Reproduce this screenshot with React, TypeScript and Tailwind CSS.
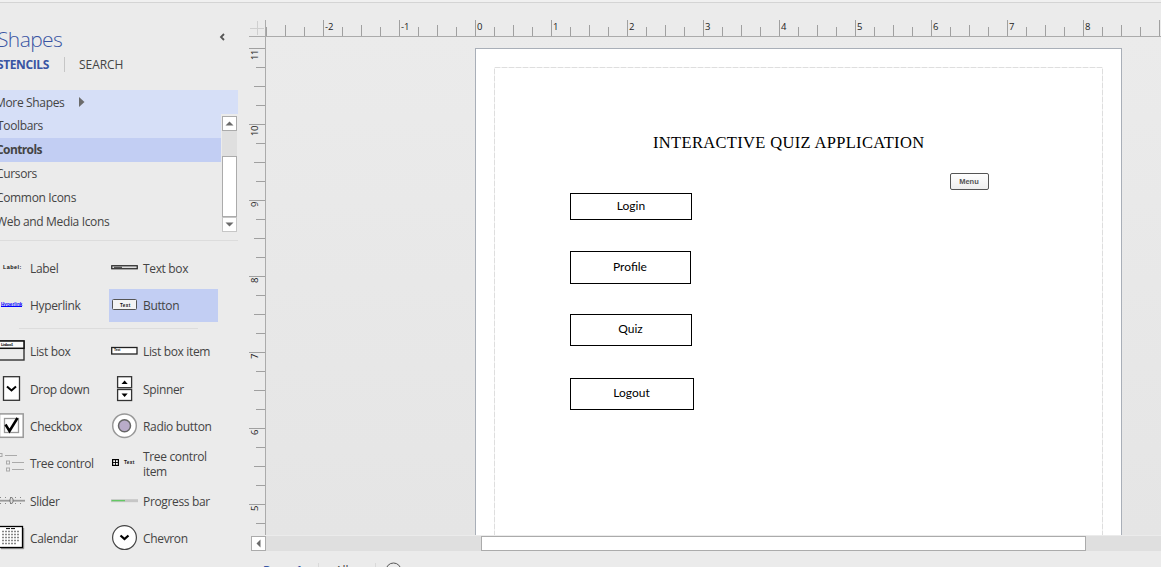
import React from "react";

const STENCILS = [
  { name: "Toolbars", row: "bg-[#d6dff7]", text: "-ml-[3px]" },
  { name: "Controls", row: "bg-[#c2cef3]", text: "-ml-[4px] font-bold tracking-[-0.6px]" },
  { name: "Cursors", row: "", text: "-ml-[4px]" },
  { name: "Common Icons", row: "", text: "-ml-[4px]" },
  { name: "Web and Media Icons", row: "", text: "-ml-[4px]" },
];

type IconProps = { h: number; children: React.ReactNode };

function LeftIcon({ h, children }: IconProps) {
  return (
    <svg className="block w-[30px] shrink-0" style={{ height: h }} viewBox={`0 0 30 ${h}`} fill="none">
      {children}
    </svg>
  );
}

function RightIcon({ h, children }: IconProps) {
  return (
    <svg className="block w-[34px] shrink-0" style={{ height: h }} viewBox={`0 0 34 ${h}`} fill="none">
      {children}
    </svg>
  );
}

const tiny = { fontFamily: "Liberation Sans, sans-serif", fontWeight: 700 };

type RowProps = {
  h: number;
  left: React.ReactNode;
  leftName: string;
  right: React.ReactNode;
  rightName: string;
  selected?: boolean;
};

function ShapeRow({ h, left, leftName, right, rightName, selected }: RowProps) {
  return (
    <div className="flex w-[218px]" style={{ height: h }}>
      <div className="flex w-[109px] items-center whitespace-nowrap">
        <LeftIcon h={h}>{left}</LeftIcon>
        <span className="pt-px">{leftName}</span>
      </div>
      <div className="flex w-[109px] items-center">
        <div className={selected ? "flex h-[33px] w-full items-center bg-[#c2cef3]" : "flex w-full items-center"}>
          <RightIcon h={selected ? 33 : h}>{right}</RightIcon>
          <span className="leading-[15px]">{rightName}</span>
        </div>
      </div>
    </div>
  );
}

function ShapeList() {
  return (
    <div className="mt-[9px] flex flex-col">
      <ShapeRow
        h={37}
        leftName="Label"
        left={<text x="3" y="19" fontSize="5.5" textLength="18" fill="#111" style={tiny}>Label:</text>}
        rightName="Text box"
        right={
          <>
            <rect x="2.75" y="15.75" width="25.5" height="3" fill="#ddd" stroke="#222" strokeWidth="1.2" />
            <path d="M5 17.3h8" stroke="#333" />
          </>
        }
      />
      <ShapeRow
        h={37}
        leftName="Hyperlink"
        left={
          <>
            <text x="1" y="19" fontSize="4.6" textLength="21" fill="#00f" style={tiny}>Hyperlink</text>
            <path d="M1 19.5h21" stroke="#00f" />
          </>
        }
        rightName="Button"
        selected
        right={
          <>
            <rect x="3.5" y="10.5" width="24" height="10" rx="1" fill="#f4f4f4" stroke="#555" />
            <text x="11" y="17.5" fontSize="4.6" textLength="10" fill="#111" style={tiny}>Text</text>
          </>
        }
      />
      <div className="ml-[19px] flex h-[9px] w-[179px] items-center">
        <div className="h-px w-full bg-[#dcdcdc]" />
      </div>
      <ShapeRow
        h={37}
        leftName="List box"
        left={
          <>
            <rect x="-2" y="8" width="26" height="19" stroke="#333" strokeWidth="1.4" />
            <rect x="-2" y="8" width="26" height="7.3" fill="#fafafa" stroke="#111" strokeWidth="1.5" />
            <text x="1" y="13.3" fontSize="4" textLength="12" fill="#111" style={tiny}>Listbox1</text>
          </>
        }
        rightName="List box item"
        right={
          <>
            <rect x="2.7" y="14.5" width="25.3" height="6.5" fill="#fff" stroke="#222" strokeWidth="1.3" />
            <text x="5" y="18.4" fontSize="3.4" textLength="6" fill="#111" style={tiny}>Text</text>
          </>
        }
      />
      <ShapeRow
        h={38}
        leftName="Drop down"
        left={
          <>
            <rect x="3.5" y="6.7" width="16" height="23.6" fill="#fff" stroke="#333" strokeWidth="1.3" />
            <path d="M7 16.5l4.5 4 4.5-4" stroke="#000" strokeWidth="2" />
          </>
        }
        rightName="Spinner"
        right={
          <>
            <rect x="8.6" y="6.7" width="14" height="11" fill="#fff" stroke="#333" strokeWidth="1.3" />
            <rect x="8.6" y="19.5" width="14" height="11" fill="#fff" stroke="#333" strokeWidth="1.3" />
            <path d="M12.5 14l3.1-3.500 3.100 3.500zM12.500 23.500h6.200l-3.100 3.500z" fill="#000" />
          </>
        }
      />
      <ShapeRow
        h={37}
        leftName="Checkbox"
        left={
          <>
            <rect x="-0.5" y="5.9" width="23.7" height="23.4" fill="#fff" stroke="#999" strokeWidth="1.5" />
            <rect x="4.5" y="10.5" width="14" height="14" stroke="#999" strokeWidth="1.3" />
            <path d="M5.5 16.5l4 6.500L17.500 10" stroke="#000" strokeWidth="2.500" />
          </>
        }
        rightName="Radio button"
        right={
          <>
            <circle cx="15.5" cy="17.7" r="11.8" fill="#fff" stroke="#999" strokeWidth="1.5" />
            <circle cx="15.5" cy="17.7" r="6" fill="#b9acc9" stroke="#666" strokeWidth="1.5" />
          </>
        }
      />
      <ShapeRow
        h={37}
        leftName="Tree control"
        left={
          <g stroke="#aaa">
            <rect x="-0.5" y="8.5" width="2.5" height="3" />
            <rect x="6.5" y="16" width="3" height="3" />
            <rect x="6.5" y="23" width="3" height="3" />
            <path d="M5 10.5h12M12 17.5h12M12 24.5h12" />
          </g>
        }
        rightName="Tree control item"
        right={
          <>
            <rect x="3.6" y="14.6" width="5.8" height="5.8" fill="#fff" stroke="#000" strokeWidth="1.2" />
            <path d="M4 17.5h5M6.5 15v5" stroke="#000" strokeWidth="0.9" />
            <text x="15" y="19.3" fontSize="4.8" textLength="10" fill="#111" style={tiny}>Text</text>
          </>
        }
      />
      <ShapeRow
        h={38}
        leftName="Slider"
        left={
          <>
            <path d="M0 18.7h25" stroke="#999" strokeWidth="1.8" />
            <path d="M0 15.5h25M0 21.5h25" stroke="#888" strokeDasharray="1 4" />
            <path d="M11.5 15l1.5 2v3l-1.500 2-1.500-2v-3z" fill="#ddd" stroke="#666" strokeWidth="0.800" />
          </>
        }
        rightName="Progress bar"
        right={
          <>
            <path d="M2 18.7h27" stroke="#c6c6c6" strokeWidth="3" />
            <path d="M2.5 18.6h13.500" stroke="#63c963" strokeWidth="1.300" />
          </>
        }
      />
      <ShapeRow
        h={37}
        leftName="Calendar"
        left={
          <>
            <path d="M1 28.7h22.700V8" stroke="#888" />
            <rect x="-1" y="6.5" width="23.5" height="21" fill="#fff" stroke="#000" strokeWidth="1.3" />
            <path d="M6 8.6h10" stroke="#000" strokeDasharray="4 1" />
            <path
              d="M2.5 11.5h18M2.5 14.5h18M2.5 17.5h18M2.5 20.5h18M2.5 23.5h15"
              stroke="#111"
              strokeDasharray="1 2"
              strokeWidth="1.5"
            />
          </>
        }
        rightName="Chevron"
        right={
          <>
            <circle cx="15.5" cy="17.6" r="11.9" fill="#fff" stroke="#444" strokeWidth="1.2" />
            <path d="M11.5 15.5l4 3.500 4-3.500" stroke="#000" strokeWidth="2.300" />
          </>
        }
      />
    </div>
  );
}

function Triangle({ d }: { d: string }) {
  return (
    <svg className="size-[9px]" viewBox="0 0 9 9" fill="#6b6b6b">
      <path d={d} />
    </svg>
  );
}

function ShapesPanel() {
  return (
    <aside className="flex w-[249px] shrink-0 flex-col overflow-hidden text-[12px] tracking-[-0.34px] text-[#444]">
      <div className="flex h-[51px] items-end justify-between pr-[23px]">
        <h1 className="mb-px -ml-[3px] text-[21px] leading-[28px] font-light tracking-[-0.6px] text-[#3955a3]">Shapes</h1>
        <svg className="mb-[13px] size-[8px]" viewBox="0 0 8 8" fill="none" stroke="#555" strokeWidth="1.8">
          <path d="M6 1L3 4l3 3" />
        </svg>
      </div>
      <div className="flex h-[36px] items-start pt-[3px] leading-[16px]">
        <span className="-ml-[3px] w-[67px] font-bold tracking-[-0.4px] text-[#3955a3]">STENCILS</span>
        <div className="h-[15px] w-px bg-[#c6c6c6]" />
        <span className="ml-[14px] tracking-[-0.05px]">SEARCH</span>
      </div>
      <div className="flex h-[24px] w-[238px] items-center bg-[#d6dff7]">
        <span className="-ml-[5px] w-[84px] pt-px">More Shapes</span>
        <svg className="h-[10px] w-[6px]" viewBox="0 0 6 10" fill="#6b6b6b">
          <path d="M0 0l5.5 5L0 10z" />
        </svg>
      </div>
      <div className="flex w-[238px]">
        <div className="w-[221px]">
          {STENCILS.map((s) => (
            <div key={s.name} className={`flex h-[24px] items-center ${s.row}`}>
              <span className={`whitespace-nowrap ${s.text}`}>{s.name}</span>
            </div>
          ))}
        </div>
        <div className="flex w-[17px] flex-col pt-[2px] pl-px">
          <div className="flex h-[15px] w-[15px] items-center justify-center border border-[#ababab] bg-white">
            <Triangle d="M0.5 6.5L4.5 2.5l4 4z" />
          </div>
          <div className="h-[25px] w-[15px] bg-[#dfdfdf]" />
          <div className="h-[61px] w-[15px] border border-[#ababab] bg-white" />
          <div className="flex h-[15px] w-[15px] items-center justify-center border border-[#c6c6c6] bg-white">
            <Triangle d="M0.5 2.5h8l-4 4z" />
          </div>
        </div>
      </div>
      <div className="mt-[6px] h-px w-[238px] bg-[#dcdcdc]" />
      <ShapeList />
    </aside>
  );
}

/* Ticks are spaced at quarter inches; every fourth one carries a number. */
const H_TICKS = Array.from({ length: 48 }, (_, i) => i - 11);
const V_TICKS = Array.from({ length: 26 }, (_, i) => i);

function HorizontalRuler() {
  return (
    <div className="flex h-[17px] overflow-hidden border-b border-[#ababab]">
      {H_TICKS.map((q) => (
        <div key={q} className="relative flex w-[19px] shrink-0 items-end">
          <div className={`w-px bg-[#a0a0a0] ${q % 4 === 0 ? "h-[16px]" : q % 2 === 0 ? "h-[11px]" : "h-[9px]"}`} />
          {q % 4 === 0 && <span className="absolute top-px left-[2px] text-[9.5px] leading-[12px] text-[#222]">{q / 4}</span>}
        </div>
      ))}
    </div>
  );
}

function VerticalRuler() {
  return (
    <div className="flex w-[17px] flex-1 flex-col overflow-hidden border-r border-[#ababab] pt-[11px]">
      {V_TICKS.map((q) => (
        <div key={q} className="relative flex h-[19px] shrink-0 justify-end">
          <div className={`h-px bg-[#a0a0a0] ${q % 4 === 0 ? "w-[16px]" : q % 2 === 0 ? "w-[11px]" : "w-[9px]"}`} />
          {q % 4 === 0 && (
            <span className="absolute top-[2px] left-0 rotate-180 text-[9.5px] leading-[12px] tracking-[-0.4px] text-[#222] [writing-mode:vertical-rl]">
              {11 - q / 4}
            </span>
          )}
        </div>
      ))}
    </div>
  );
}

const BOXES = [
  { name: "Login", box: "top-[144px] left-[94px] h-[27px] w-[122px] pb-px" },
  { name: "Profile", box: "top-[202px] left-[94px] h-[33px] w-[121px] pb-px pr-px" },
  { name: "Quiz", box: "top-[265px] left-[94px] h-[32px] w-[122px] pb-[3px] pr-px" },
  { name: "Logout", box: "top-[329px] left-[94px] h-[32px] w-[124px] pb-[3px] pr-px" },
];

function Canvas() {
  return (
    <div className="flex h-[498px] overflow-hidden bg-gradient-to-b from-[#ebebeb] to-[#e5e5e5] pt-[11px] pl-[209px]">
      <div className="relative h-[600px] w-[647px] shrink-0 border border-[#a9afb8] bg-white p-[18px]">
        <svg className="block h-[560px] w-[609px]" fill="none" stroke="#f0f0f0">
          <path d="M0.5 560V0.5H608.5V560" />
          <path d="M0.5 560V0.5H608.5V560" stroke="#dedede" strokeDasharray="5 2" />
        </svg>
        <div className="absolute top-[83px] left-[177px] font-['Liberation_Serif',serif] text-[16.5px] leading-[21px] tracking-[0.33px] whitespace-nowrap text-black">
          INTERACTIVE QUIZ APPLICATION
        </div>
        {BOXES.map((b) => (
          <div
            key={b.name}
            className={`absolute flex items-center justify-center border border-black font-['Lato',sans-serif] text-[12px] leading-none text-black ${b.box}`}
          >
            {b.name}
          </div>
        ))}
        <div className="absolute top-[124px] left-[474px] flex h-[17px] w-[39px] items-center justify-center rounded-[2px] border border-[#555] bg-gradient-to-b from-white to-[#eee] pr-px font-['Liberation_Sans',sans-serif] text-[7.5px] leading-none font-bold text-[#555]">
          Menu
        </div>
      </div>
    </div>
  );
}

export default function App() {
  return (
    <div className="flex h-[567px] w-[1161px] flex-col overflow-hidden bg-[#ebebeb] font-['Open_Sans',sans-serif]">
      <div className="h-[3px] shrink-0 border-b border-[#d4d4d4] bg-[#f0f0f0]" />
      <div className="flex min-h-0 flex-1">
        <ShapesPanel />
        <main className="flex w-[912px] flex-col">
          <div className="flex h-[532px] pt-[17px]">
            <div className="flex w-[17px] shrink-0 flex-col">
              <div className="h-[17px] border-r border-b border-[#ababab]">
                <svg className="block h-[16px] w-[16px]" stroke="#cfcfcf">
                  <path d="M1 8.5h14M8.5 1v14" />
                </svg>
              </div>
              <VerticalRuler />
            </div>
            <div className="w-[895px]">
              <HorizontalRuler />
              <Canvas />
            </div>
          </div>
          <div className="mt-px flex h-[15px] shrink-0 pl-[2px]">
            <div className="flex w-[15px] items-center justify-center border border-[#ababab] bg-white">
              <Triangle d="M6.5 0.5v8l-4-4z" />
            </div>
            <div className="flex flex-1 bg-[#dfdfdf] pl-[215px]">
              <div className="w-[605px] border border-[#ababab] bg-white" />
            </div>
          </div>
          <div className="flex h-[16px] shrink-0 overflow-hidden text-[12px] text-[#444]">
            <div className="mt-[12px] ml-[14px] w-[55px] leading-[16px] font-bold text-[#3955a3]">Page-1</div>
            <div className="mt-[12px] w-px bg-[#d9d9d9]" />
            <div className="mt-[12px] ml-[16px] w-[40px] leading-[16px]">All</div>
            <div className="mt-[12px] w-px bg-[#d9d9d9]" />
            <svg className="mt-[11px] ml-[9px] block size-[17px] shrink-0" fill="none" stroke="#555">
              <circle cx="8.5" cy="8.5" r="7.5" />
            </svg>
          </div>
        </main>
      </div>
    </div>
  );
}
